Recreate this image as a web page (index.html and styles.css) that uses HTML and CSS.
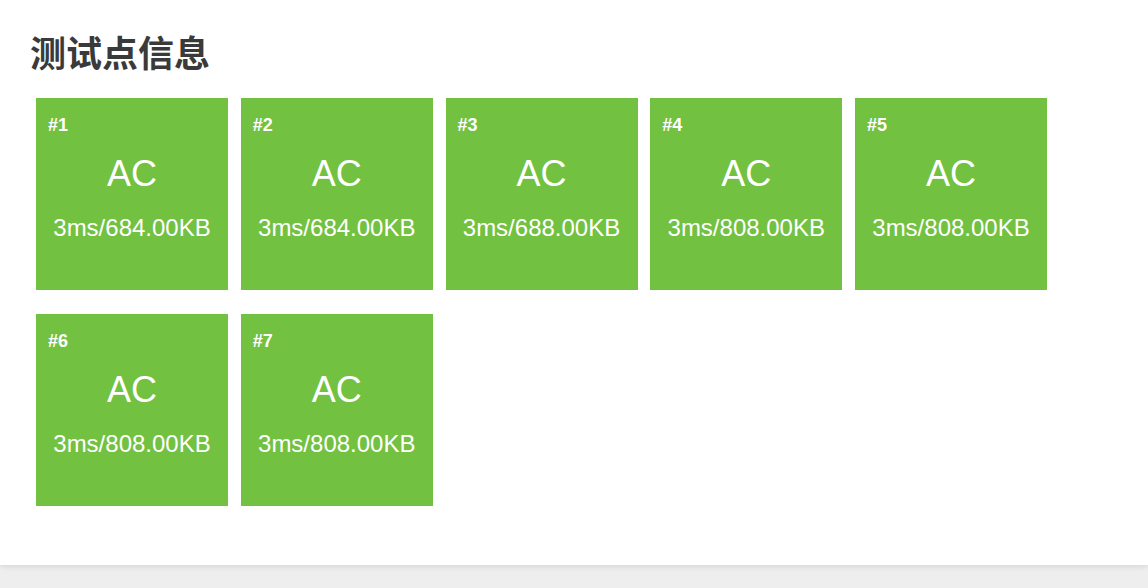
FILE: index.html
```html
<!DOCTYPE html>
<html lang="zh">
<head>
<meta charset="utf-8">
<title>测试点信息</title>
<link rel="stylesheet" href="styles.css">
</head>
<body>
<div class="card">
  <h2 class="title">测试点信息</h2>
  <div class="cases">
    <div class="case"><div class="num">#1</div><div class="res">AC</div><div class="stat">3ms/684.00KB</div></div>
    <div class="case"><div class="num">#2</div><div class="res">AC</div><div class="stat">3ms/684.00KB</div></div>
    <div class="case"><div class="num">#3</div><div class="res">AC</div><div class="stat">3ms/688.00KB</div></div>
    <div class="case"><div class="num">#4</div><div class="res">AC</div><div class="stat">3ms/808.00KB</div></div>
    <div class="case"><div class="num">#5</div><div class="res">AC</div><div class="stat">3ms/808.00KB</div></div>
    <div class="case"><div class="num">#6</div><div class="res">AC</div><div class="stat">3ms/808.00KB</div></div>
    <div class="case"><div class="num">#7</div><div class="res">AC</div><div class="stat">3ms/808.00KB</div></div>
  </div>
</div>
</body>
</html>
```
FILE: styles.css
```css
html, body {
  margin: 0;
  padding: 0;
  background: #eeeeee;
  height: 100%;
}
body {
  font-family: "Liberation Sans", "Noto Sans CJK SC", sans-serif;
}
.card {
  background: #ffffff;
  padding: 31px 30px 59px;
  box-shadow: 0 1px 6px rgba(0, 0, 0, 0.12);
}
.title {
  margin: 0 0 26px;
  font-family: "Noto Sans CJK SC", sans-serif;
  font-size: 36px;
  line-height: 41px;
  font-weight: 700;
  color: #3a3a3a;
}
.cases {
  display: flex;
  flex-wrap: wrap;
  column-gap: 12.75px;
  row-gap: 24px;
  margin-left: 6px;
  width: 1020px;
}
.case {
  width: 192px;
  height: 192px;
  box-sizing: border-box;
  background: #72c140;
  color: #ffffff;
  padding: 16px 12px 0;
  display: flex;
  flex-direction: column;
  align-items: center;
}
.num {
  align-self: flex-start;
  font-size: 18px;
  line-height: 22px;
  font-weight: 700;
}
.res {
  margin-top: 18px;
  font-size: 36px;
  line-height: 40px;
}
.stat {
  margin-top: 20px;
  font-size: 24px;
  line-height: 28px;
  white-space: nowrap;
}
```
